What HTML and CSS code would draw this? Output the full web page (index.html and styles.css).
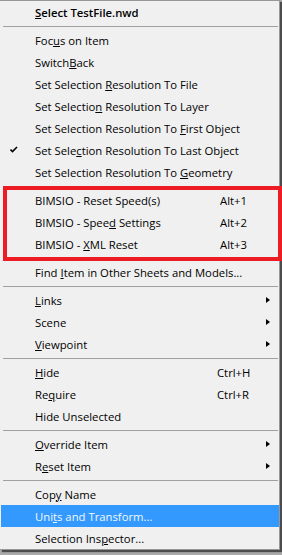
FILE: index.html
```html
<!DOCTYPE html>
<html>
<head>
<meta charset="utf-8">
<link rel="stylesheet" href="styles.css">
</head>
<body>
<div class="stage">
  <div class="menu">
    <div class="item bold"><span class="gut"></span><span class="label"><u>S</u>elect TestFile.nwd</span><span class="key"></span><span class="sub"></span></div>
    <div class="sep"></div>
    <div class="item"><span class="gut"></span><span class="label">Foc<u>u</u>s on Item</span><span class="key"></span><span class="sub"></span></div>
    <div class="item"><span class="gut"></span><span class="label">Switch<u>B</u>ack</span><span class="key"></span><span class="sub"></span></div>
    <div class="item"><span class="gut"></span><span class="label">Set Selection <u>R</u>esolution To File</span><span class="key"></span><span class="sub"></span></div>
    <div class="item"><span class="gut"></span><span class="label">Set Selectio<u>n</u> Resolution To Layer</span><span class="key"></span><span class="sub"></span></div>
    <div class="item"><span class="gut"></span><span class="label">Set Selection Resolution To <u>F</u>irst Object</span><span class="key"></span><span class="sub"></span></div>
    <div class="item"><span class="gut"><svg class="check" width="8" height="8" viewBox="0 0 8 8"><path d="M0.5 3.5 L2.5 5.5 L7 1" fill="none" stroke="#000" stroke-width="1.6"/></svg></span><span class="label">Set Sele<u>c</u>tion Resolution To Last Object</span><span class="key"></span><span class="sub"></span></div>
    <div class="item"><span class="gut"></span><span class="label">Set Selection Resolution To <u>G</u>eometry</span><span class="key"></span><span class="sub"></span></div>
    <div class="sep"></div>
    <div class="item"><span class="gut"></span><span class="label">BIMSIO - Reset Speed(s<u>)</u></span><span class="key alt">Alt+1</span><span class="sub"></span></div>
    <div class="item"><span class="gut"></span><span class="label">BIMSIO - Spee<u>d</u> Settings</span><span class="key alt">Alt+2</span><span class="sub"></span></div>
    <div class="item"><span class="gut"></span><span class="label">BIMSIO - <u>X</u>ML Reset</span><span class="key alt">Alt+3</span><span class="sub"></span></div>
    <div class="sep"></div>
    <div class="item"><span class="gut"></span><span class="label">Find <u>I</u>tem in Other Sheets and Models...</span><span class="key"></span><span class="sub"></span></div>
    <div class="sep"></div>
    <div class="item"><span class="gut"></span><span class="label"><u>L</u>inks</span><span class="key"></span><span class="sub"><span class="arrow"></span></span></div>
    <div class="item"><span class="gut"></span><span class="label">Scene</span><span class="key"></span><span class="sub"><span class="arrow"></span></span></div>
    <div class="item"><span class="gut"></span><span class="label"><u>V</u>iewpoint</span><span class="key"></span><span class="sub"><span class="arrow"></span></span></div>
    <div class="sep"></div>
    <div class="item"><span class="gut"></span><span class="label"><u>H</u>ide</span><span class="key">Ctrl+H</span><span class="sub"></span></div>
    <div class="item"><span class="gut"></span><span class="label">Re<u>q</u>uire</span><span class="key">Ctrl+R</span><span class="sub"></span></div>
    <div class="item"><span class="gut"></span><span class="label">Hide Unselected</span><span class="key"></span><span class="sub"></span></div>
    <div class="sep"></div>
    <div class="item"><span class="gut"></span><span class="label"><u>O</u>verride Item</span><span class="key"></span><span class="sub"><span class="arrow"></span></span></div>
    <div class="item"><span class="gut"></span><span class="label">R<u>e</u>set Item</span><span class="key"></span><span class="sub"><span class="arrow"></span></span></div>
    <div class="sep"></div>
    <div class="item"><span class="gut"></span><span class="label">Cop<u>y</u> Name</span><span class="key"></span><span class="sub"></span></div>
    <div class="item active"><span class="gut"></span><span class="label">Uni<u>t</u>s and Transform...</span><span class="key"></span><span class="sub"></span></div>
    <div class="item"><span class="gut"></span><span class="label">Selection Ins<u>p</u>ector...</span><span class="key"></span><span class="sub"></span></div>
  </div>
  <div class="annot"></div>
</div>
</body>
</html>
```

FILE: styles.css
```css
html, body {
  margin: 0;
  padding: 0;
}
body {
  background: #a9a9a9;
  width: 282px;
  height: 555px;
  overflow: hidden;
  font-family: "Open Sans", "Noto Sans", sans-serif;
  font-size: 11.3px;
  color: #000;
}
.stage {
  position: relative;
  width: 282px;
  height: 555px;
}
.menu {
  width: 278px;
  padding-left: 1px;
  background: #f0f0f0;
  border-top: 1px solid #979797;
  border-right: 1px solid #979797;
  border-bottom: 1px solid #979797;
  box-shadow: 2px 2px 1px rgba(0, 0, 0, 0.55);
}
.item {
  height: 22px;
  display: grid;
  grid-template-columns: 34px 182px 1fr 13px;
  align-items: center;
  white-space: nowrap;
}
.item.bold {
  font-weight: 600;
}
.item.active {
  background: #3399ff;
  color: #f4f8fc;
}
.gut {
  display: flex;
  align-items: center;
  padding-left: 9px;
  height: 100%;
}
.key.alt {
  padding-left: 3px;
}
.sub {
  display: flex;
  align-items: center;
}
.arrow {
  width: 0;
  height: 0;
  border-top: 3.5px solid transparent;
  border-bottom: 3.5px solid transparent;
  border-left: 4px solid #000;
}
.sep {
  height: 6px;
  display: flex;
  align-items: center;
  padding: 0 1px 0 2px;
}
.sep::before {
  content: "";
  display: block;
  flex: 1;
  height: 1px;
  background: #a0a0a0;
}
.annot {
  position: absolute;
  left: 3px;
  top: 186px;
  width: 271px;
  height: 67px;
  border: 4px solid #ed1c24;
}
```
